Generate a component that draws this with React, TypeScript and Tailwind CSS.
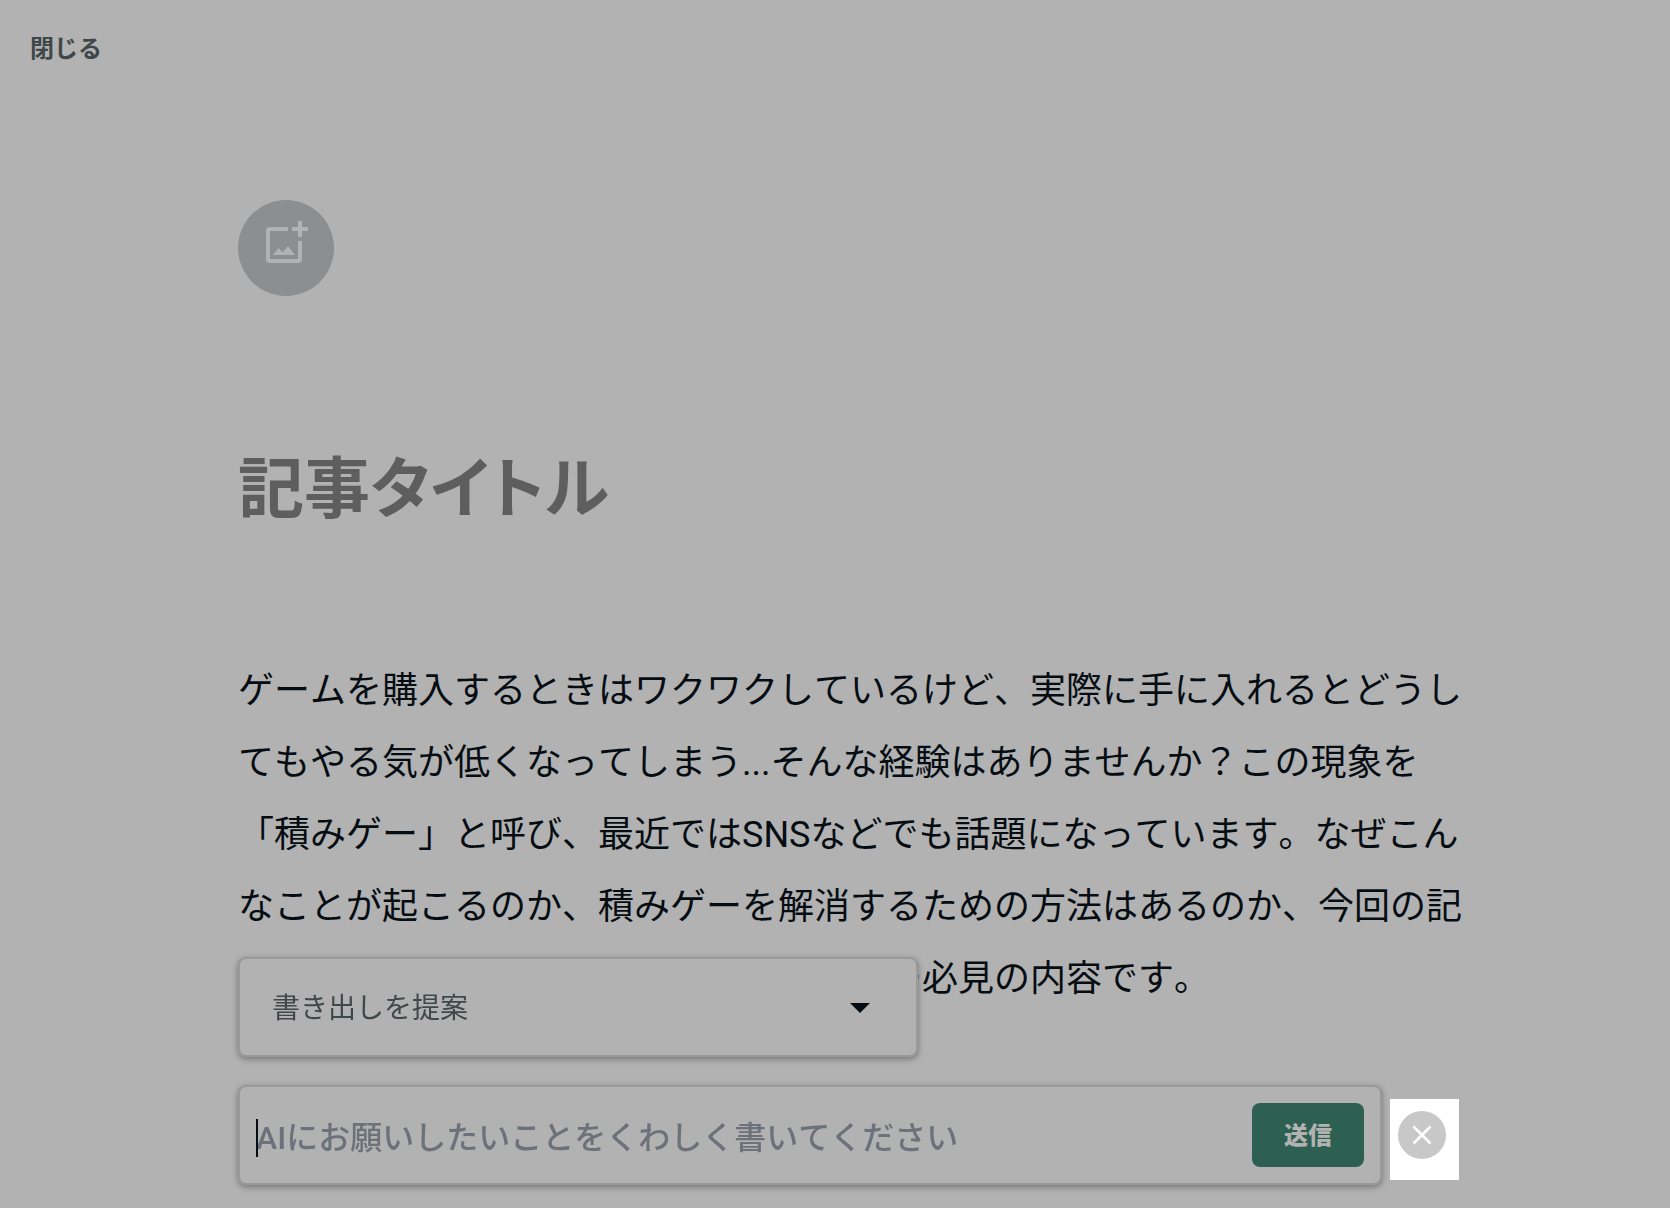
import { useState } from 'react'

const bodyText =
  'ゲームを購入するときはワクワクしているけど、実際に手に入れるとどうしてもやる気が低くなってしまう...そんな経験はありませんか？この現象を「積みゲー」と呼び、最近ではSNSなどでも話題になっています。なぜこんなことが起こるのか、積みゲーを解消するための方法はあるのか、今回の記事では、積みゲーに悩んでいる全ゲーマー必見の内容です。'

function AddImageIcon() {
  return (
    <svg viewBox="0 0 24 24" className="h-12 w-12" fill="currentColor" aria-hidden="true">
      <path d="M13 4H4a2 2 0 0 0-2 2v14a2 2 0 0 0 2 2h14a2 2 0 0 0 2-2v-9h-2v9H4V6h9z" />
      <path d="M18 1h2v3h3v2h-3v3h-2V6h-3V4h3z" />
      <path d="M5.500 18h11L13 13.500l-2.800 3.300-1.900-2.300z" />
    </svg>
  )
}

function PromptSelect() {
  return (
    <div className="relative w-[680px] max-w-full rounded-lg border-2 border-[#999999] bg-[#b2b2b2] shadow-[0_2px_6px_rgba(0,0,0,0.35)]">
      <select
        aria-label="提案の種類"
        className="block h-24 w-full appearance-none rounded-lg bg-transparent pt-1 pr-20 pl-8 text-[28px] text-[#3f4748] outline-none"
      >
        <option>書き出しを提案</option>
      </select>
      <svg
        viewBox="0 0 20 10"
        className="pointer-events-none absolute top-11 right-[46px] h-[10px] w-5"
        fill="#060d12"
        aria-hidden="true"
      >
        <path d="M0 0h20L10 10z" />
      </svg>
    </div>
  )
}

function PromptForm() {
  const [prompt, setPrompt] = useState('')

  return (
    <form
      onSubmit={(e) => e.preventDefault()}
      className="flex h-[100px] min-w-0 flex-1 items-center rounded-lg border-2 border-[#999999] bg-[#b2b2b2] pr-4 shadow-[0_2px_6px_rgba(0,0,0,0.35)]"
    >
      <div className="relative min-w-0 flex-1">
        <input
          type="text"
          aria-label="AIへのお願い"
          value={prompt}
          onChange={(e) => setPrompt(e.target.value)}
          placeholder="AIにお願いしたいことをくわしく書いてください"
          className="block h-16 w-full bg-transparent pt-1.5 pl-4 text-[32px] text-[#060d12] outline-none placeholder:font-medium placeholder:text-[#6d727a]"
        />
        {prompt === '' && (
          <span className="pointer-events-none absolute top-4 left-4 h-[38px] w-[2px] bg-[#060d12]" />
        )}
      </div>
      <button
        type="submit"
        className="h-16 w-28 shrink-0 rounded-lg bg-[#2d6050] pt-0.5 text-2xl font-black text-[#b2b2b2]"
      >
        送信
      </button>
    </form>
  )
}

export default function App() {
  return (
    <div
      lang="ja"
      className="min-h-screen bg-[#b2b2b2] font-[Roboto,'Noto_Sans_CJK_JP',sans-serif] text-[#060d12] [font-kerning:none]"
    >
      <header className="px-[30px] py-6">
        <button type="button" className="h-12 pt-0.5 text-2xl font-bold text-[#3f4748]">
          閉じる
        </button>
      </header>

      <main className="pt-[104px] pr-[202px] pl-[238px]">
        <button
          type="button"
          aria-label="画像を追加"
          className="flex h-24 w-24 items-center justify-center rounded-full bg-[#8d8e90] pb-[10px] text-[#b2b2b2]"
        >
          <AddImageIcon />
        </button>

        <input
          type="text"
          aria-label="記事タイトル"
          placeholder="記事タイトル"
          className="mt-36 block h-24 w-full bg-transparent pt-0.5 text-[66px] font-bold outline-none [font-feature-settings:'palt'] placeholder:text-[#5e5e5e]"
        />

        <p className="mt-[119px] text-[36px] leading-[72px]">{bodyText}</p>
      </main>

      <div className="fixed inset-x-0 bottom-0 flex flex-col gap-7 pr-[211px] pb-[23px] pl-[238px]">
        <PromptSelect />
        <div className="flex items-end gap-2">
          <PromptForm />
          <div className="mb-[5px] h-[81px] w-[69px] shrink-0 bg-white px-2 pt-3">
            <button
              type="button"
              aria-label="閉じる"
              className="flex h-12 w-12 items-center justify-center rounded-full bg-[#c8c8c8]"
            >
              <svg viewBox="0 0 20 20" className="h-5 w-5" stroke="#ffffff" strokeWidth="2.500" aria-hidden="true">
                <path d="M1.500 1.500l17 17M18.500 1.500l-17 17" />
              </svg>
            </button>
          </div>
        </div>
      </div>
    </div>
  )
}
